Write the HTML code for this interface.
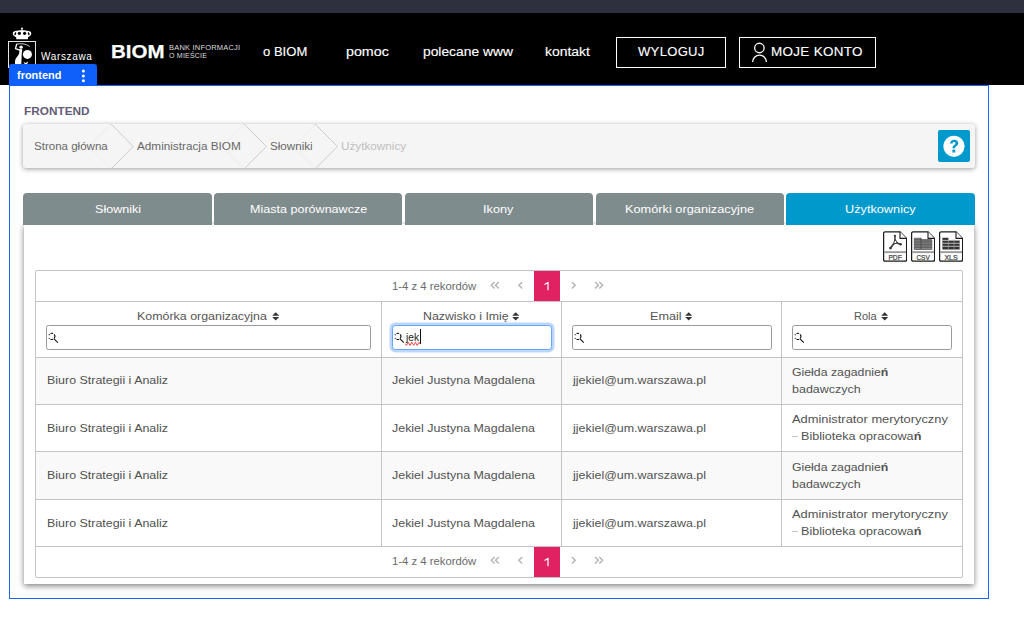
<!DOCTYPE html>
<html lang="pl">
<head>
<meta charset="utf-8">
<title>BIOM - Użytkownicy</title>
<style>
*{box-sizing:border-box;margin:0;padding:0}
html,body{width:1024px;height:636px;overflow:hidden;background:#fff;font-family:"Liberation Sans",sans-serif;color:#444}
.abs,.t,svg.i{position:absolute}
.t{white-space:nowrap;line-height:20px;height:20px;transform-origin:0 50%}
#topbar{left:0;top:0;width:1024px;height:13px;background:#2f303d}
#hdr{left:0;top:13px;width:1024px;height:72px;background:#000}
.btn{border:1px solid #fff;top:37px;height:31px}
#ftab{left:9px;top:64.400px;width:88px;height:21.600px;background:#0f60fb;border-radius:3px 3px 0 0}
#outline{left:9px;top:85px;width:980px;height:514px;border:1px solid #1466ff}
#bc{left:23px;top:124px;width:952px;height:44.300px;background:#f5f5f5;border-radius:3px;box-shadow:0 1px 5px rgba(0,0,0,.4);overflow:hidden}
#help{left:938px;top:130px;width:32px;height:32px;background:#0099cc;border-radius:2px}
.tab{top:193px;height:31.5px;background:#7f8c8d;border-radius:4px 4px 0 0}
.tab.on{background:#0099cc}
#panel{left:24px;top:224px;width:950px;height:359.500px;background:#fff;box-shadow:0 2px 6px rgba(0,0,0,.5)}
#tbl{left:35px;top:270px;width:928px;height:308px;border:1px solid #c4c4c4;border-radius:2px}
.hl{background:#c4c4c4;height:1px;left:35px;width:928px}
.vl{background:#c4c4c4;width:1px;top:301px;height:246px}
.row{left:36px;width:926px;background:#f9f9f9}
.inp{top:325px;height:25px;border:1px solid #9a9a9a;border-radius:2.500px;background:#fff}
.inp.f{border-color:#66a6f4;box-shadow:0 0 0 2.500px #bcd7fb;border-radius:3.500px}
.pgb{background:#e02162;width:26px;height:30px;left:534px}
</style>
</head>
<body>
<div class="abs" id="topbar"></div>
<div class="abs" id="hdr"></div>

<!-- logo -->
<svg class="i" style="left:6px;top:26px" width="34" height="42" viewBox="6 26 34 42">
 <!-- crown -->
 <g fill="#fff">
  <circle cx="22" cy="28.600" r="1"/>
  <rect x="21.550" y="29" width="0.900" height="2.200"/>
  <path d="M12.700 33.600c0-2.100 2.300-3.100 4.600-2.800 1.500-.5 3-.6 4.700-.6s3.200.1 4.700.6c2.300-.3 4.600.7 4.600 2.800 0 1.500-1.200 2.600-2.900 3.300H15.600c-1.700-.7-2.900-1.800-2.900-3.300z"/>
  <rect x="16.200" y="36.700" width="11.800" height="2.500" rx=".5"/>
 </g>
 <g fill="#000">
  <circle cx="19.400" cy="33.300" r="1.600"/>
  <circle cx="24.600" cy="33.300" r="1.600"/>
  <ellipse cx="15.300" cy="33.700" rx=".800" ry="1.600" transform="rotate(18 15.300 33.700)"/>
  <ellipse cx="28.700" cy="33.700" rx=".800" ry="1.600" transform="rotate(-18 28.700 33.700)"/>
 </g>
 <!-- box -->
 <rect x="8.500" y="41.500" width="27" height="30" fill="none" stroke="#e6e6e6" stroke-width="1"/>
 <!-- mermaid -->
 <g fill="#fff">
  <circle cx="27.400" cy="54.400" r="4.500"/>
  <ellipse cx="21.100" cy="47.200" rx="1.750" ry="1.600"/>
  <path d="M19.600 49L22.300 49.300C22.200 51 21.800 52.600 21.700 54.200C21.600 57.500 21.500 61 21.300 64.500H15C14.900 62.300 15 60.300 15.800 58.600C16.600 56.800 18.400 55.400 19.100 53.400C19.500 52 19.400 50.500 19.600 49z"/>
  <path d="M23.400 61.800L25.700 62.900L28.200 61.300L27 64.400L24.800 64.200z"/>
 </g>
 <path d="M19.800 50.100L15.500 48.600L16.600 44.300" fill="none" stroke="#fff" stroke-width="1.300" stroke-linejoin="round" stroke-linecap="round"/>
 <path d="M16.300 44.300C20 43.100 26 43.600 29.800 46.600" fill="none" stroke="#fff" stroke-width=".800"/>
</svg>

<div class="abs btn" style="left:616px;width:110px"></div>
<div class="abs btn" style="left:739px;width:137px"></div>
<svg class="i" style="left:750px;top:41px" width="20" height="23" viewBox="750 41 20 23">
 <circle cx="759.400" cy="48" r="4.750" fill="none" stroke="#f4f4f4" stroke-width="1.350"/>
 <path d="M752.600 62.100a6.900 7 0 0 1 13.800 0" fill="none" stroke="#f4f4f4" stroke-width="1.400"/>
</svg>

<div class="abs" id="outline"></div>
<div class="abs" id="ftab"></div>
<svg class="i" style="left:80px;top:68px" width="8" height="16" viewBox="80 68 8 16">
 <circle cx="83.400" cy="71.100" r="1.500" fill="#fff"/><circle cx="83.400" cy="75.900" r="1.500" fill="#fff"/><circle cx="83.400" cy="80.700" r="1.500" fill="#fff"/>
</svg>

<div class="abs" id="bc">
 <svg class="i" style="left:0;top:0" width="952" height="44" viewBox="23 124 952 44">
  <g fill="none" stroke-width="1">
   <path d="M111 124L133.200 146.500L111 169" stroke="#cdcdcd"/>
   <path d="M244.200 124L266.400 146.500L244.200 169" stroke="#cdcdcd"/>
   <path d="M315.200 124L337.400 146.500L315.200 169" stroke="#cdcdcd"/>
   <path d="M111 124L88.800 146.500L111 169M244.200 124L222 146.500L244.200 169M315.200 124L293 146.500L315.200 169" stroke="#ececec"/>
  </g>
 </svg>
</div>
<div class="abs" id="help"></div>
<svg class="i" style="left:938px;top:130px" width="32" height="32" viewBox="938 130 32 32">
 <circle cx="954" cy="146.300" r="10.600" fill="#fff"/>
 <path d="M950 143.600c.2-2.500 1.900-3.800 4.200-3.800 2.400 0 4.100 1.300 4.100 3.300 0 1.600-.9 2.500-2 3.200-.9.600-1.100 1-1.100 2h-2.700c0-1.700.4-2.400 1.600-3.300.9-.6 1.300-1 1.300-1.700 0-.7-.5-1.200-1.300-1.200-.9 0-1.400.5-1.500 1.500z" fill="#0099cc"/>
 <rect x="952.400" y="149.600" width="2.900" height="2.900" fill="#0099cc"/>
</svg>

<div class="abs" id="panel"></div>
<div class="abs tab" style="left:23px;width:188.500px"></div>
<div class="abs tab" style="left:214px;width:188.200px"></div>
<div class="abs tab" style="left:405.200px;width:187.600px"></div>
<div class="abs tab" style="left:596px;width:187.800px"></div>
<div class="abs tab on" style="left:786.200px;width:188.800px"></div>

<svg class="i" style="left:882.8px;top:231px" width="24.5" height="31" viewBox="0 0 24.5 31"><path d="M2 0.8H17L23.6 7.4V28.8a1.4 1.4 0 0 1-1.400 1.400H2a1.400 1.400 0 0 1-1.400-1.400V2.200A1.400 1.400 0 0 1 2 .8z" fill="#fff" stroke="#1c1c1c" stroke-width="1.250"/><path d="M17 0.800V7.400H23.600" fill="#f6f6f6" stroke="#1c1c1c" stroke-width="1.100" stroke-linejoin="round"/><rect x="1.200" y="20.200" width="21.800" height="1.900" fill="#9a9a9a"/><g fill="none" stroke="#3c3c3c" stroke-linecap="round" stroke-linejoin="round"><path d="M11.900 4.800L12 9.400" stroke-width="1.500"/><path d="M10.700 12.700L7.600 17" stroke-width="1.700"/><path d="M13.800 12L17.500 13.200" stroke-width="1.600"/><path d="M12 8.800L10.300 13.100L14.300 12.100z" stroke-width="1"/></g><circle cx="11.900" cy="4.800" r="1.100" fill="#3c3c3c"/><circle cx="7.500" cy="17.100" r="1.400" fill="#3c3c3c"/><circle cx="17.600" cy="13.200" r="1.300" fill="#3c3c3c"/><text x="12.100" y="28.700" text-anchor="middle" font-family="Liberation Sans, sans-serif" font-size="7.200" fill="#4a4a4a" stroke="#4a4a4a" stroke-width=".250" textLength="13.400" lengthAdjust="spacingAndGlyphs">PDF</text></svg>
<svg class="i" style="left:910.9px;top:231px" width="24.5" height="31" viewBox="0 0 24.5 31"><path d="M2 0.8H17L23.6 7.4V28.8a1.4 1.4 0 0 1-1.400 1.400H2a1.400 1.400 0 0 1-1.400-1.400V2.200A1.400 1.400 0 0 1 2 .8z" fill="#fff" stroke="#1c1c1c" stroke-width="1.250"/><path d="M17 0.800V7.400H23.600" fill="#f6f6f6" stroke="#1c1c1c" stroke-width="1.100" stroke-linejoin="round"/><rect x="1.200" y="20.200" width="21.800" height="1.900" fill="#9a9a9a"/><path d="M3.300 7.200H10V9H20.800V18.500H3.300z" fill="#8c8c8c" stroke="#505050" stroke-width=".7"/><path d="M10 7.200V18.500" stroke="#444" stroke-width=".8"/><path d="M3.300 8.6H20.800" stroke="#4a4a4a" stroke-width=".7"/><path d="M3.300 10.2H20.800" stroke="#4a4a4a" stroke-width=".7"/><path d="M3.300 11.8H20.800" stroke="#4a4a4a" stroke-width=".7"/><path d="M3.300 13.4H20.800" stroke="#4a4a4a" stroke-width=".7"/><path d="M3.300 15H20.800" stroke="#4a4a4a" stroke-width=".7"/><path d="M3.300 16.6H20.800" stroke="#4a4a4a" stroke-width=".7"/><text x="12.100" y="28.700" text-anchor="middle" font-family="Liberation Sans, sans-serif" font-size="7.200" fill="#4a4a4a" stroke="#4a4a4a" stroke-width=".250" textLength="13.400" lengthAdjust="spacingAndGlyphs">CSV</text></svg>
<svg class="i" style="left:938.8px;top:231px" width="24.5" height="31" viewBox="0 0 24.5 31"><path d="M2 0.8H17L23.6 7.4V28.8a1.4 1.4 0 0 1-1.400 1.400H2a1.400 1.400 0 0 1-1.400-1.400V2.200A1.400 1.400 0 0 1 2 .8z" fill="#fff" stroke="#1c1c1c" stroke-width="1.250"/><path d="M17 0.800V7.400H23.600" fill="#f6f6f6" stroke="#1c1c1c" stroke-width="1.100" stroke-linejoin="round"/><rect x="1.200" y="20.200" width="21.800" height="1.900" fill="#9a9a9a"/><path d="M3.400 6.700H9.400V9H20.600V18.400H3.400z" fill="#333"/><path d="M3.400 9.4H20.600" stroke="#ddd" stroke-width=".8"/><path d="M3.400 12.3H20.600" stroke="#ddd" stroke-width=".8"/><path d="M3.400 15.3H20.600" stroke="#ddd" stroke-width=".8"/><path d="M9.4 8V18.400" stroke="#aaa" stroke-width=".6"/><path d="M15 8V18.400" stroke="#aaa" stroke-width=".6"/><text x="12.100" y="28.700" text-anchor="middle" font-family="Liberation Sans, sans-serif" font-size="7.200" fill="#4a4a4a" stroke="#4a4a4a" stroke-width=".250" textLength="13.400" lengthAdjust="spacingAndGlyphs">XLS</text></svg>

<!-- table -->
<div class="abs row" style="top:358px;height:46px"></div>
<div class="abs row" style="top:452px;height:47px"></div>
<div class="abs" id="tbl"></div>
<div class="abs hl" style="top:301px"></div>
<div class="abs hl" style="top:357px"></div>
<div class="abs hl" style="top:404px"></div>
<div class="abs hl" style="top:451px"></div>
<div class="abs hl" style="top:499px"></div>
<div class="abs hl" style="top:546px"></div>
<div class="abs vl" style="left:381px"></div>
<div class="abs vl" style="left:561px"></div>
<div class="abs vl" style="left:781px"></div>

<div class="abs inp" style="left:46px;width:325px"></div>
<div class="abs inp f" style="left:392px;width:160px"></div>
<div class="abs inp" style="left:572px;width:200px"></div>
<div class="abs inp" style="left:792px;width:160px"></div>

<div class="abs pgb" style="top:271px"></div>
<div class="abs pgb" style="top:547px"></div>

<svg class="i" style="left:46px;top:331px" width="14" height="14" viewBox="46 331 14 14"><g transform="translate(51.8 336.4)" fill="none" stroke="#111" stroke-width="1.050"><path d="M-1.300 -2.900A3.150 3.150 0 0 1 1.300 -2.900"/><path d="M2.400 -2A3.150 3.150 0 0 1 2.400 2"/><path d="M1.300 2.900A3.150 3.150 0 0 1 -1.300 2.900"/><path d="M2 2.300L6 6.200"/></g><circle cx="49.2" cy="334.7" r=".600" fill="#111"/><circle cx="49.2" cy="338.3" r=".600" fill="#111"/></svg>
<svg class="i" style="left:392px;top:331px" width="14" height="14" viewBox="392 331 14 14"><g transform="translate(397.8 336.4)" fill="none" stroke="#111" stroke-width="1.050"><path d="M-1.300 -2.900A3.150 3.150 0 0 1 1.300 -2.900"/><path d="M2.400 -2A3.150 3.150 0 0 1 2.400 2"/><path d="M1.300 2.900A3.150 3.150 0 0 1 -1.300 2.900"/><path d="M2 2.300L6 6.200"/></g><circle cx="395.2" cy="334.7" r=".600" fill="#111"/><circle cx="395.2" cy="338.3" r=".600" fill="#111"/></svg>
<svg class="i" style="left:572px;top:331px" width="14" height="14" viewBox="572 331 14 14"><g transform="translate(577.8 336.4)" fill="none" stroke="#111" stroke-width="1.050"><path d="M-1.300 -2.900A3.150 3.150 0 0 1 1.300 -2.900"/><path d="M2.400 -2A3.150 3.150 0 0 1 2.400 2"/><path d="M1.300 2.900A3.150 3.150 0 0 1 -1.300 2.900"/><path d="M2 2.300L6 6.200"/></g><circle cx="575.2" cy="334.7" r=".600" fill="#111"/><circle cx="575.2" cy="338.3" r=".600" fill="#111"/></svg>
<svg class="i" style="left:792px;top:331px" width="14" height="14" viewBox="792 331 14 14"><g transform="translate(797.8 336.4)" fill="none" stroke="#111" stroke-width="1.050"><path d="M-1.300 -2.900A3.150 3.150 0 0 1 1.300 -2.900"/><path d="M2.400 -2A3.150 3.150 0 0 1 2.400 2"/><path d="M1.300 2.900A3.150 3.150 0 0 1 -1.300 2.900"/><path d="M2 2.300L6 6.200"/></g><circle cx="795.2" cy="334.7" r=".600" fill="#111"/><circle cx="795.2" cy="338.3" r=".600" fill="#111"/></svg>
<svg class="i" style="left:272.0px;top:312px" width="7.4" height="9" viewBox="0 0 7.4 9"><path d="M3.7 0.2L7.2 3.7H0.2zM0.2 5.1H7.2L3.7 8.6z" fill="#333"/></svg>
<svg class="i" style="left:511.7px;top:312px" width="7.4" height="9" viewBox="0 0 7.4 9"><path d="M3.7 0.2L7.2 3.7H0.2zM0.2 5.1H7.2L3.7 8.6z" fill="#333"/></svg>
<svg class="i" style="left:684.9px;top:312px" width="7.4" height="9" viewBox="0 0 7.4 9"><path d="M3.7 0.2L7.2 3.7H0.2zM0.2 5.1H7.2L3.7 8.6z" fill="#333"/></svg>
<svg class="i" style="left:881.4px;top:312px" width="7.4" height="9" viewBox="0 0 7.4 9"><path d="M3.7 0.2L7.2 3.7H0.2zM0.2 5.1H7.2L3.7 8.6z" fill="#333"/></svg>
<svg class="i" style="left:488px;top:280.6px" width="118" height="9" viewBox="488 -1 118 9"><g fill="none" stroke="#b4b4b4" stroke-width="1.450"><path d="M494.6 0L491.3 3.2L494.6 6.4"/><path d="M498.8 0L495.5 3.2L498.8 6.4"/><path d="M522.2 0L518.9 3.2L522.2 6.4"/><path d="M571.9 0L575.2 3.2L571.9 6.4"/><path d="M595.1 0L598.4 3.2L595.1 6.4"/><path d="M599.3 0L602.6 3.2L599.3 6.4"/></g></svg>
<svg class="i" style="left:488px;top:556.2px" width="118" height="9" viewBox="488 -1 118 9"><g fill="none" stroke="#b4b4b4" stroke-width="1.450"><path d="M494.6 0L491.3 3.2L494.6 6.4"/><path d="M498.8 0L495.5 3.2L498.8 6.4"/><path d="M522.2 0L518.9 3.2L522.2 6.4"/><path d="M571.9 0L575.2 3.2L571.9 6.4"/><path d="M595.1 0L598.4 3.2L595.1 6.4"/><path d="M599.3 0L602.6 3.2L599.3 6.4"/></g></svg>
<svg class="i" style="left:543px;top:280.0px" width="8" height="12" viewBox="543 280 8 12"><path d="M544.500 284.500L548 282.500V290.200" fill="none" stroke="#fff" stroke-width="1.250"/></svg>
<svg class="i" style="left:543px;top:555.6px" width="8" height="12" viewBox="543 280 8 12"><path d="M544.500 284.500L548 282.500V290.200" fill="none" stroke="#fff" stroke-width="1.250"/></svg>
<div class="abs" style="left:420px;top:329px;width:1px;height:15px;background:#111"></div>
<svg class="i" style="left:405px;top:341px" width="16" height="6" viewBox="0 0 16 6"><path d="M0.500 2.800q0.900 3 1.800 0t1.800 0t1.800 0t1.800 0t1.800 0t1.800 0t1.800 0t1.800 0" fill="none" stroke="#f5363a" stroke-width="1"/></svg>
<div class="abs" style="left:792px;top:436px;width:6px;height:1px;background:#c9c9c9"></div>
<div class="abs" style="left:792px;top:531px;width:6px;height:1px;background:#c9c9c9"></div>

<div class="t" style="left:41.20px;top:46.70px;font-size:10.4px;color:#fff;transform:scaleX(0.9599);letter-spacing:0.7px">Warszawa</div>
<div class="t" style="left:110.98px;top:42.39px;font-size:18.2px;color:#fff;transform:scaleX(1.1250);font-weight:bold;-webkit-text-stroke:0.25px #fff">BIOM</div>
<div class="t" style="left:169.10px;top:38.37px;font-size:7.3px;color:#ddd;transform:scaleX(1.0266);letter-spacing:0.2px">BANK INFORMACJI</div>
<div class="t" style="left:169.10px;top:46.17px;font-size:7.3px;color:#ddd;transform:scaleX(0.9660);letter-spacing:0.2px">O MIEŚCIE</div>
<div class="t" style="left:263.00px;top:41.94px;font-size:12.3px;color:#fff;transform:scaleX(1.0618);-webkit-text-stroke:0.12px #fff">o BIOM</div>
<div class="t" style="left:346.30px;top:41.94px;font-size:12.3px;color:#fff;transform:scaleX(1.1589);-webkit-text-stroke:0.12px #fff">pomoc</div>
<div class="t" style="left:423.00px;top:41.94px;font-size:12.3px;color:#fff;transform:scaleX(1.1237);-webkit-text-stroke:0.12px #fff">polecane www</div>
<div class="t" style="left:545.40px;top:41.94px;font-size:12.3px;color:#fff;transform:scaleX(1.1335);-webkit-text-stroke:0.12px #fff">kontakt</div>
<div class="t" style="left:637.80px;top:41.94px;font-size:12.3px;color:#fff;transform:scaleX(1.0599);letter-spacing:0.3px;-webkit-text-stroke:0.12px #fff">WYLOGUJ</div>
<div class="t" style="left:771.21px;top:41.94px;font-size:12.3px;color:#fff;transform:scaleX(1.0911);letter-spacing:0.3px;-webkit-text-stroke:0.12px #fff">MOJE KONTO</div>
<div class="t" style="left:17.00px;top:64.79px;font-size:11px;color:#fff;transform:scaleX(0.9958);font-weight:bold">frontend</div>
<div class="t" style="left:23.75px;top:101.05px;font-size:11.4px;color:#625c76;transform:scaleX(1.0365);font-weight:bold">FRONTEND</div>
<div class="t" style="left:33.75px;top:136.94px;font-size:10px;color:#686868;transform:scaleX(1.1535)">Strona główna</div>
<div class="t" style="left:137.00px;top:136.94px;font-size:10px;color:#686868;transform:scaleX(1.1735)">Administracja BIOM</div>
<div class="t" style="left:269.60px;top:136.94px;font-size:10px;color:#686868;transform:scaleX(1.1630)">Słowniki</div>
<div class="t" style="left:341.00px;top:136.94px;font-size:10px;color:#bebebe;transform:scaleX(1.1734)">Użytkownicy</div>
<div class="t" style="left:94.60px;top:198.78px;font-size:11.6px;color:#fff;transform:scaleX(1.0846)">Słowniki</div>
<div class="t" style="left:249.80px;top:198.78px;font-size:11.6px;color:#fff;transform:scaleX(1.0825)">Miasta porównawcze</div>
<div class="t" style="left:483.30px;top:198.78px;font-size:11.6px;color:#fff;transform:scaleX(1.0961)">Ikony</div>
<div class="t" style="left:624.60px;top:198.78px;font-size:11.6px;color:#fff;transform:scaleX(1.1007)">Komórki organizacyjne</div>
<div class="t" style="left:844.50px;top:198.78px;font-size:11.6px;color:#fff;transform:scaleX(1.0971)">Użytkownicy</div>
<div class="t" style="left:136.80px;top:306.38px;font-size:11.3px;color:#555;transform:scaleX(1.0996)">Komórka organizacyjna</div>
<div class="t" style="left:422.60px;top:306.38px;font-size:11.3px;color:#555;transform:scaleX(1.0923)">Nazwisko i Imię</div>
<div class="t" style="left:650.30px;top:306.38px;font-size:11.3px;color:#555;transform:scaleX(1.1176)">Email</div>
<div class="t" style="left:853.70px;top:306.38px;font-size:11.3px;color:#555;transform:scaleX(0.9770)">Rola</div>
<div class="t" style="left:391.70px;top:275.88px;font-size:11.3px;color:#6a6a6a;transform:scaleX(1.0014)">1-4 z 4 rekordów</div>
<div class="t" style="left:391.70px;top:551.48px;font-size:11.3px;color:#6a6a6a;transform:scaleX(1.0014)">1-4 z 4 rekordów</div>
<div class="t" style="left:406.44px;top:327.26px;font-size:10.8px;color:#222;transform:scaleX(0.9413)">jek</div>
<div class="t" style="left:46.60px;top:369.98px;font-size:11.3px;color:#525252;transform:scaleX(1.1014)">Biuro Strategii i Analiz</div>
<div class="t" style="left:391.70px;top:369.98px;font-size:11.3px;color:#525252;transform:scaleX(1.1002)">Jekiel Justyna Magdalena</div>
<div class="t" style="left:572.50px;top:369.98px;font-size:11.3px;color:#525252;transform:scaleX(1.1023)">jjekiel@um.warszawa.pl</div>
<div class="t" style="left:46.60px;top:417.88px;font-size:11.3px;color:#525252;transform:scaleX(1.1014)">Biuro Strategii i Analiz</div>
<div class="t" style="left:391.70px;top:417.88px;font-size:11.3px;color:#525252;transform:scaleX(1.1002)">Jekiel Justyna Magdalena</div>
<div class="t" style="left:572.50px;top:417.88px;font-size:11.3px;color:#525252;transform:scaleX(1.1023)">jjekiel@um.warszawa.pl</div>
<div class="t" style="left:46.60px;top:465.28px;font-size:11.3px;color:#525252;transform:scaleX(1.1014)">Biuro Strategii i Analiz</div>
<div class="t" style="left:391.70px;top:465.28px;font-size:11.3px;color:#525252;transform:scaleX(1.1002)">Jekiel Justyna Magdalena</div>
<div class="t" style="left:572.50px;top:465.28px;font-size:11.3px;color:#525252;transform:scaleX(1.1023)">jjekiel@um.warszawa.pl</div>
<div class="t" style="left:46.60px;top:512.58px;font-size:11.3px;color:#525252;transform:scaleX(1.1014)">Biuro Strategii i Analiz</div>
<div class="t" style="left:391.70px;top:512.58px;font-size:11.3px;color:#525252;transform:scaleX(1.1002)">Jekiel Justyna Magdalena</div>
<div class="t" style="left:572.50px;top:512.58px;font-size:11.3px;color:#525252;transform:scaleX(1.1023)">jjekiel@um.warszawa.pl</div>
<div class="t" style="left:792.10px;top:362.18px;font-size:11.3px;color:#525252;transform:scaleX(1.0873)">Giełda zagadnie<b>ń</b></div>
<div class="t" style="left:792.10px;top:378.88px;font-size:11.3px;color:#525252;transform:scaleX(1.1053)">badawczych</div>
<div class="t" style="left:792.10px;top:457.08px;font-size:11.3px;color:#525252;transform:scaleX(1.0873)">Giełda zagadnie<b>ń</b></div>
<div class="t" style="left:792.10px;top:473.78px;font-size:11.3px;color:#525252;transform:scaleX(1.1053)">badawczych</div>
<div class="t" style="left:792.10px;top:409.08px;font-size:11.3px;color:#525252;transform:scaleX(1.1392)">Administrator merytoryczny</div>
<div class="t" style="left:800.90px;top:426.08px;font-size:11.3px;color:#525252;transform:scaleX(1.1139)">Biblioteka opracowa<b>ń</b></div>
<div class="t" style="left:792.10px;top:503.98px;font-size:11.3px;color:#525252;transform:scaleX(1.1392)">Administrator merytoryczny</div>
<div class="t" style="left:800.90px;top:521.08px;font-size:11.3px;color:#525252;transform:scaleX(1.1139)">Biblioteka opracowa<b>ń</b></div>

</body>
</html>
